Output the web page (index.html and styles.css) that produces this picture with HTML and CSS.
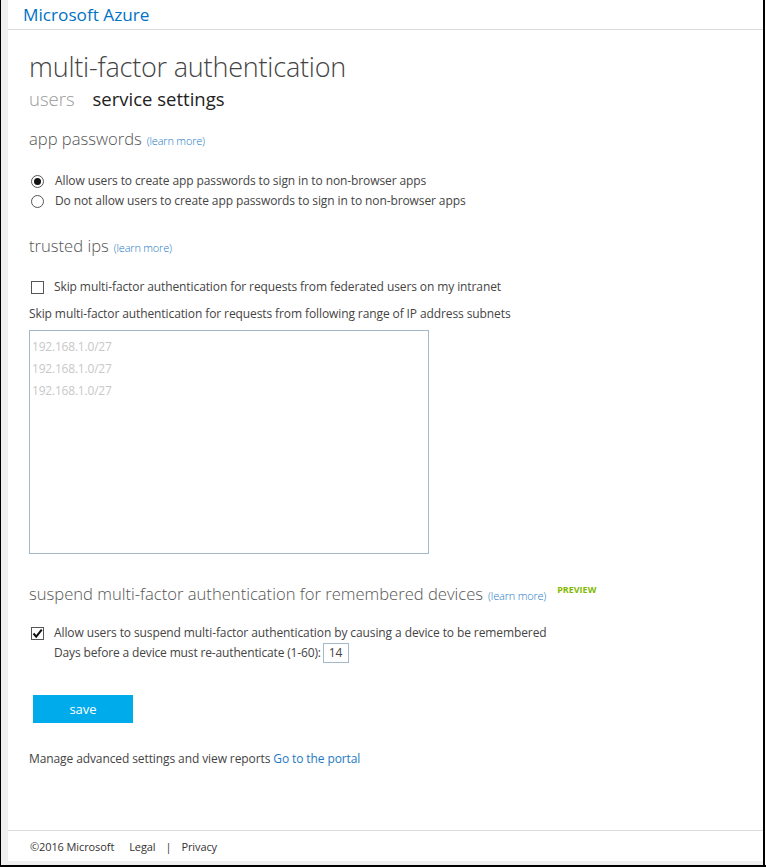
FILE: index.html
```html
<!DOCTYPE html>
<html>
<head>
<meta charset="utf-8">
<link rel="stylesheet" href="styles.css">
</head>
<body>
<div class="frame">
  <div class="sidebar"></div>
  <div class="page">
    <header class="topbar"><span class="brand">Microsoft Azure</span></header>
    <main class="content">
      <h1 class="title">multi-factor authentication</h1>
      <nav class="tabs">
        <span class="tab">users</span>
        <span class="tab active">service settings</span>
      </nav>

      <section class="sec sec-app">
        <h2 class="sec-title">app passwords <a class="learn">(learn more)</a></h2>
        <div class="options">
          <label class="opt"><span class="radio on"></span>Allow users to create app passwords to sign in to non-browser apps</label>
          <label class="opt"><span class="radio"></span>Do not allow users to create app passwords to sign in to non-browser apps</label>
        </div>
      </section>

      <section class="sec sec-ips">
        <h2 class="sec-title">trusted ips <a class="learn">(learn more)</a></h2>
        <label class="opt opt-check"><span class="check"></span>Skip multi-factor authentication for requests from federated users on my intranet</label>
        <p class="label">Skip multi-factor authentication for requests from following range of IP address subnets</p>
        <div class="ipbox">
          <div class="ph">192.168.1.0/27</div>
          <div class="ph">192.168.1.0/27</div>
          <div class="ph">192.168.1.0/27</div>
        </div>
      </section>

      <section class="sec sec-dev">
        <h2 class="sec-title">suspend multi-factor authentication for remembered devices <a class="learn">(learn more)</a><span class="preview">PREVIEW</span></h2>
        <label class="opt opt-check2"><span class="check on"><svg viewBox="0 0 13 13" width="13" height="13"><path d="M2.5 6.5 L5.2 9.6 L10.8 2.6" fill="none" stroke="#111" stroke-width="2"/></svg></span>Allow users to suspend multi-factor authentication by causing a device to be remembered</label>
        <div class="days">Days before a device must re-authenticate (1-60): <span class="daybox">14</span></div>
      </section>

      <button class="save">save</button>

      <p class="manage">Manage advanced settings and view reports <a class="portal">Go to the portal</a></p>
    </main>
    <footer class="footer">
      <span class="copy">©2016 Microsoft</span>
      <span class="flink">Legal</span>
      <span class="sep">|</span>
      <span class="flink">Privacy</span>
    </footer>
  </div>
  <div class="rightedge"></div>
</div>
</body>
</html>
```
FILE: styles.css
```css
* { box-sizing: border-box; }
html, body { margin: 0; padding: 0; background: #fff; }
body {
  font-family: "Open Sans", "Noto Sans", sans-serif;
  color: #444;
  width: 766px;
  height: 867px;
  overflow: hidden;
}
.frame {
  display: flex;
  width: 766px;
  height: 867px;
}
.sidebar {
  width: 8px;
  border-left: 1px solid #000;
  border-bottom: 2px solid #000;
  background: #efefef;
}
.page {
  width: 755px;
  display: flex;
  flex-direction: column;
  border-bottom: 2px solid #000;
}
.rightedge {
  width: 3px;
  border-left: 2px solid #000;
  border-bottom: 2px solid #000;
}
.topbar {
  height: 30px;
  border-bottom: 1px solid #dcdcdc;
  padding-left: 15px;
  display: flex;
  align-items: center;
}
.brand {
  font-size: 17.2px;
  color: #0072c6;
  line-height: 28px;
}
.content {
  flex: 1;
  padding-left: 21px;
}
.title {
  margin: 19px 0 0;
  font-size: 27px;
  font-weight: 300;
  color: #444;
  line-height: 36px;
  letter-spacing: -0.2px;
}
.tabs {
  display: flex;
  gap: 18px;
  margin-top: 2px;
  line-height: 24px;
}
.tab {
  font-size: 18.5px;
  font-weight: 300;
  color: #999;
}
.tab.active { color: #222; font-weight: 400; }
.sec-title {
  margin: 0;
  font-size: 16.6px;
  font-weight: 300;
  color: #555;
  line-height: 24px;
  display: flex;
  align-items: baseline;
}
.learn {
  font-size: 11px;
  color: #1e7ac4;
  margin-left: 5px;
  letter-spacing: -0.2px;
}
.sec-app { margin-top: 16px; }
.options { margin-top: 18px; }
.opt {
  display: flex;
  align-items: center;
  font-size: 12px;
  color: #444;
  line-height: 20px;
  letter-spacing: -0.1px;
}
.radio {
  width: 13px;
  height: 13px;
  border: 1px solid #555;
  border-radius: 50%;
  margin: 0 11px 0 2px;
  position: relative;
  flex: none;
}
.radio.on::after {
  content: "";
  position: absolute;
  left: 2px;
  top: 2px;
  width: 7px;
  height: 7px;
  border-radius: 50%;
  background: #111;
}
.check {
  width: 13px;
  height: 13px;
  border: 1px solid #555;
  margin: 0 10px 0 2px;
  flex: none;
  display: flex;
  align-items: center;
  justify-content: center;
}
.check svg { display: block; margin: -1px; }
.sec-ips { margin-top: 23px; }
.opt-check { margin-top: 17px; }
.label {
  margin: 7px 0 0;
  font-size: 12px;
  line-height: 20px;
  color: #444;
  letter-spacing: -0.1px;
}
.ipbox {
  margin-top: 6px;
  width: 400px;
  height: 224px;
  border: 1px solid #a3b8c8;
  padding: 5px 2px 3px;
}
.ph {
  font-size: 12px;
  color: #c8c8c8;
  line-height: 22px;
  letter-spacing: -0.2px;
}
.sec-dev { margin-top: 28px; }
.preview {
  font-size: 9px;
  font-weight: 700;
  color: #7fba00;
  margin-left: 11px;
  align-self: flex-start;
  line-height: 16px;
}
.opt-check2 { margin-top: 16px; line-height: 18px; }
.days {
  margin-left: 25px;
  font-size: 12px;
  color: #444;
  line-height: 22px;
  display: flex;
  align-items: center;
  gap: 2px;
  letter-spacing: -0.15px;
}
.daybox {
  display: inline-block;
  width: 26px;
  height: 20px;
  border: 1px solid #a3b8c8;
  padding-left: 5px;
  line-height: 18px;
}
.save {
  display: block;
  margin: 31px 0 0 4px;
  width: 100px;
  height: 28px;
  border: none;
  background: #00abec;
  color: #fff;
  font-family: inherit;
  font-size: 13px;
  padding: 0;
}
.manage {
  margin: 26px 0 0;
  font-size: 12px;
  color: #444;
  line-height: 20px;
  letter-spacing: -0.1px;
}
.portal { color: #1e7ac4; }
.footer {
  height: 35px;
  border-top: 1px solid #dcdcdc;
  border-bottom: 4px solid #efefef;
  padding-left: 22px;
  display: flex;
  align-items: center;
  font-size: 11px;
  color: #333;
  letter-spacing: -0.1px;
}
.flink { margin-left: 14px; }
.copy + .flink { margin-left: 15px; }
.sep { margin-left: 10px; }
.sep + .flink { margin-left: 10px; }
```
